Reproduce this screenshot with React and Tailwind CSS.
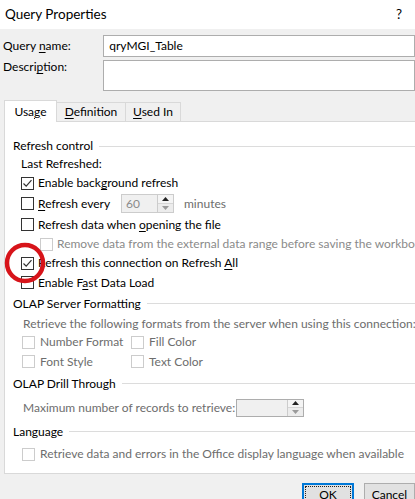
import React from "react";

const U = ({ children }) => <span className="underline underline-offset-2">{children}</span>;

function Check({ checked, disabled }) {
  return (
    <span
      className={
        "inline-flex w-[13px] h-[13px] shrink-0 items-center justify-center border bg-white " +
        (disabled ? "border-[#cccccc]" : "border-[#333333]")
      }
    >
      {checked && (
        <svg width="11" height="11" viewBox="0 0 11 11">
          <path d="M1.5 5.5 L4.2 8.2 L9.5 2.2" fill="none" stroke="#333" strokeWidth="1.2" />
        </svg>
      )}
    </span>
  );
}

function Spin() {
  return (
    <span className="flex flex-col w-[16px] h-full border-l border-[#cccccc] bg-[#f0f0f0]">
      <span className="flex-1 flex items-center justify-center border-b border-[#d6d6d6] bg-[#f4f4f4]">
        <svg width="7" height="4" viewBox="0 0 7 4"><path d="M0 4 L3.5 0 L7 4 Z" fill="#222" /></svg>
      </span>
      <span className="flex-1 flex items-center justify-center bg-[#ececec]">
        <svg width="7" height="4" viewBox="0 0 7 4"><path d="M0 0 L3.5 4 L7 0 Z" fill="#9a9a9a" /></svg>
      </span>
    </span>
  );
}

function Group({ children, h }) {
  return (
    <div className={"flex items-center pl-[8px] gap-[6px] " + h}>
      <span className="whitespace-nowrap text-black">{children}</span>
      <span className="flex-1 h-px bg-[#dcdcdc]" />
    </div>
  );
}

export default function App() {
  return (
    <div
      className="relative w-[415px] h-[499px] overflow-hidden bg-[#f0f0f0] text-[12px] text-black"
      style={{ fontFamily: "Lato, 'Noto Sans', sans-serif" }}
    >
      {/* title bar */}
      <div className="h-[29px] bg-white flex items-center justify-between pl-[5px] pr-[13px]">
        <span className="text-[13.5px]">Query Properties</span>
        <span className="text-[13.5px]">?</span>
      </div>

      {/* query name */}
      <div className="flex mt-[6px] h-[22px]">
        <div className="w-[106px] pl-[3px] flex items-center">
          <span>Query <U>n</U>ame:</span>
        </div>
        <div className="w-[320px] border border-[#adadad] bg-white flex items-center pl-[5px]">qryMGI_Table</div>
      </div>
      <div className="flex mt-[3px] h-[31px]">
        <div className="w-[106px] pl-[3px] leading-[13px]">
          <span>Descri<U>p</U>tion:</span>
        </div>
        <div className="w-[320px] border border-[#adadad] bg-white" />
      </div>

      {/* tabs */}
      <div className="flex items-end mt-[9px] pl-[4px] h-[21px]">
        <div className="relative z-10 h-[22px] -mb-px w-[53px] border border-b-0 border-[#d9d9d9] bg-white flex items-center justify-center">
          <span>Usa<U>g</U>e</span>
        </div>
        <div className="h-[19px] w-[69px] border border-l-0 border-b-0 border-[#d9d9d9] bg-[#f0f0f0] flex items-center justify-center">
          <span><U>D</U>efinition</span>
        </div>
        <div className="h-[19px] w-[55px] border border-l-0 border-b-0 border-[#d9d9d9] bg-[#f0f0f0] flex items-center justify-center">
          <span><U>U</U>sed In</span>
        </div>
      </div>

      {/* panel */}
      <div className="ml-[4px] w-[430px] h-[353px] border border-[#d9d9d9] bg-white pt-[15px]">
        <Group h="h-[18px]">Refresh control</Group>
        <div className="h-[18px] flex items-center pl-[16px]">Last Refreshed:</div>
        <div className="h-[20px] flex items-center pl-[16px] gap-[4px]">
          <Check checked />
          <span>Enable back<U>g</U>round refresh</span>
        </div>
        <div className="h-[21px] flex items-center pl-[16px]">
          <Check />
          <span className="ml-[4px] w-[83px]"><U>R</U>efresh every</span>
          <span className="flex h-[19px] w-[53px] border border-[#cccccc] bg-[#f0f0f0]">
            <span className="flex-1 flex items-center pl-[4px] text-[#8a8a8a]">60</span>
            <Spin />
          </span>
          <span className="ml-[10px] text-[#6d6d6d]">minutes</span>
        </div>
        <div className="h-[21px] flex items-center pl-[16px] gap-[4px]">
          <Check />
          <span>Refresh data when <U>o</U>pening the file</span>
        </div>
        <div className="h-[18px] flex items-center pl-[35px] gap-[4px] whitespace-nowrap">
          <Check disabled />
          <span className="text-[#8a8a8a]">Remove data from the external data range before saving the workbook</span>
        </div>
        <div className="h-[20px] flex items-center pl-[16px] gap-[4px]">
          <Check checked />
          <span>Refresh this connection on Refresh <U>A</U>ll</span>
        </div>
        <div className="h-[19px] flex items-center pl-[16px] gap-[4px]">
          <Check />
          <span>Enable F<U>a</U>st Data Load</span>
        </div>
        <Group h="h-[23px]">OLAP Server Formatting</Group>
        <div className="h-[17px] flex items-center pl-[18px] text-[#6d6d6d] whitespace-nowrap">
          Retrieve the following formats from the server when using this connection:
        </div>
        <div className="h-[20px] flex items-center pl-[17px] text-[#6d6d6d]">
          <Check disabled />
          <span className="ml-[5px] w-[91px]">Number Format</span>
          <Check disabled />
          <span className="ml-[5px]">Fill Color</span>
        </div>
        <div className="h-[19px] flex items-center pl-[17px] text-[#6d6d6d]">
          <Check disabled />
          <span className="ml-[5px] w-[91px]">Font Style</span>
          <Check disabled />
          <span className="ml-[5px]">Text Color</span>
        </div>
        <Group h="h-[25px]">OLAP Drill Through</Group>
        <div className="h-[23px] flex items-center pl-[18px] text-[#6d6d6d]">
          <span className="w-[213px] shrink-0 whitespace-nowrap">Maximum number of records to retrieve:</span>
          <span className="flex h-[18px] w-[68px] border border-[#adadad] bg-[#f0f0f0]">
            <span className="flex-1" />
            <Spin />
          </span>
        </div>
        <Group h="h-[25px]">Language</Group>
        <div className="h-[20px] flex items-center pl-[17px] gap-[5px] text-[#6d6d6d]">
          <Check disabled />
          <span>Retrieve data and errors in the Office display language when available</span>
        </div>
      </div>

      {/* buttons */}
      <div className="flex mt-[9px] pl-[302px] gap-[10px]">
        <div className="w-[74px] h-[24px] border-2 border-[#0078d7] bg-[#e1e1e1] p-[1px]">
          <div className="w-full h-full border border-dotted border-[#222] flex items-center justify-center">OK</div>
        </div>
        <div className="w-[75px] h-[24px] border border-[#adadad] bg-[#e1e1e1] flex items-center justify-center">Cancel</div>
      </div>

      {/* red annotation circle */}
      <svg className="absolute left-0 top-0 pointer-events-none" width="60" height="300">
        <ellipse cx="25" cy="263" rx="18" ry="18" fill="none" stroke="#d7141a" strokeWidth="4.5" />
      </svg>
    </div>
  );
}
